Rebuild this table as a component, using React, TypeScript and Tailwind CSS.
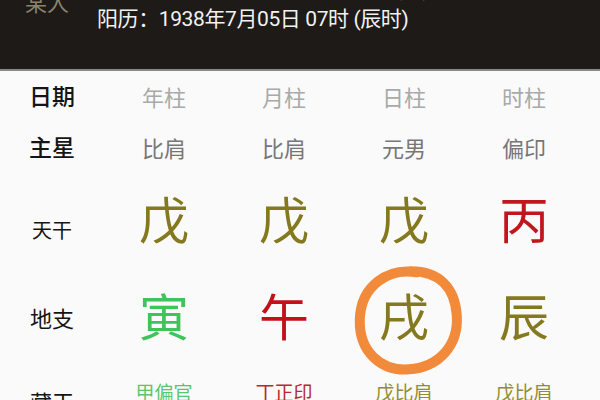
const font = { fontFamily: 'Roboto, "Noto Sans CJK SC", "Noto Sans", sans-serif' }

interface Cell {
  text: string
  color: string
}

const columns = ['年柱', '月柱', '日柱', '时柱']
const stars = ['比肩', '比肩', '元男', '偏印']

const stems: Cell[] = [
  { text: '戊', color: 'text-[#85791f]' },
  { text: '戊', color: 'text-[#85791f]' },
  { text: '戊', color: 'text-[#85791f]' },
  { text: '丙', color: 'text-[#c2161d]' },
]

const branches: Cell[] = [
  { text: '寅', color: 'text-[#3fc45c]' },
  { text: '午', color: 'text-[#c0121b]' },
  { text: '戌', color: 'text-[#85791f]' },
  { text: '辰', color: 'text-[#85791f]' },
]

const hidden: Cell[] = [
  { text: '甲偏官', color: 'text-[#5cc470]' },
  { text: '丁正印', color: 'text-[#b52a2a]' },
  { text: '戊比肩', color: 'text-[#968b35]' },
  { text: '戊比肩', color: 'text-[#968b35]' },
]

const row = 'grid grid-cols-[104px_repeat(4,120px)]'

// hand drawn ring around the day branch
function Circle() {
  return (
    <svg
      className="pointer-events-none absolute left-1/2 top-1/2 -translate-x-[46%] -translate-y-[48%]"
      width="120"
      height="116"
      viewBox="0 0 120 116"
    >
      <path
        d="M68 9 C 40 4, 12 22, 11 56 C 10 88, 32 108, 60 106 C 90 104, 110 82, 108 52 C 106 24, 90 8, 62 8"
        fill="none"
        stroke="#f28a3c"
        strokeWidth="10"
        strokeLinecap="round"
      />
    </svg>
  )
}

export default function App() {
  return (
    <div className="h-[400px] w-[600px] overflow-hidden bg-[#fafafa]" style={font}>
      <div className="h-[71px] border-b-2 border-[#8a8886] bg-[#1e1a17]">
        <div className="flex">
          <div className="ml-[25px] mt-[-11px] w-[72px] text-[22px] leading-[30px] text-[#8a846c]">某人</div>
          <div className="mt-[-26px] flex flex-col text-[21px] leading-[30px] tracking-[-0.4px] text-[#f2f2f2]">
            <div className="text-[#d8d8d8]">
              农历：一九三八年六月初八 辰时 <span className="text-[#7d7a3a]">(忌)</span>
            </div>
            <div>阳历：1938年7月05日 07时 (辰时)</div>
          </div>
        </div>
      </div>

      <div className={`${row} h-[55px] items-center`}>
        <div className="text-center text-[23px] font-medium text-[#151515]">日期</div>
        {columns.map((c) => (
          <div key={c} className="text-center text-[22px] text-[#a9a9a9]">
            {c}
          </div>
        ))}
      </div>

      <div className={`${row} h-[46px] items-center`}>
        <div className="text-center text-[23px] font-medium text-[#151515]">主星</div>
        {stars.map((s, i) => (
          <div key={i} className="text-center text-[22px] text-[#777777]">
            {s}
          </div>
        ))}
      </div>

      <div className={`${row} h-[100px] items-center`}>
        <div className="pt-[18px] text-center text-[20px] text-[#151515]">天干</div>
        {stems.map((s, i) => (
          <div key={i} className={`text-center text-[50px] leading-none ${s.color}`}>
            {s.text}
          </div>
        ))}
      </div>

      <div className={`${row} h-[94px] items-center`}>
        <div className="text-center text-[22px] text-[#151515]">地支</div>
        {branches.map((b, i) => (
          <div key={i} className={`relative text-center text-[50px] leading-none ${b.color}`}>
            {b.text}
            {i === 2 && <Circle />}
          </div>
        ))}
      </div>

      <div className={`${row} items-start`}>
        <div className="pt-[27px] text-center text-[22px] leading-none text-[#151515]">藏干</div>
        {hidden.map((h, i) => (
          <div key={i} className={`pt-[18px] text-center text-[19px] leading-none ${h.color}`}>
            {h.text}
          </div>
        ))}
      </div>
    </div>
  )
}
